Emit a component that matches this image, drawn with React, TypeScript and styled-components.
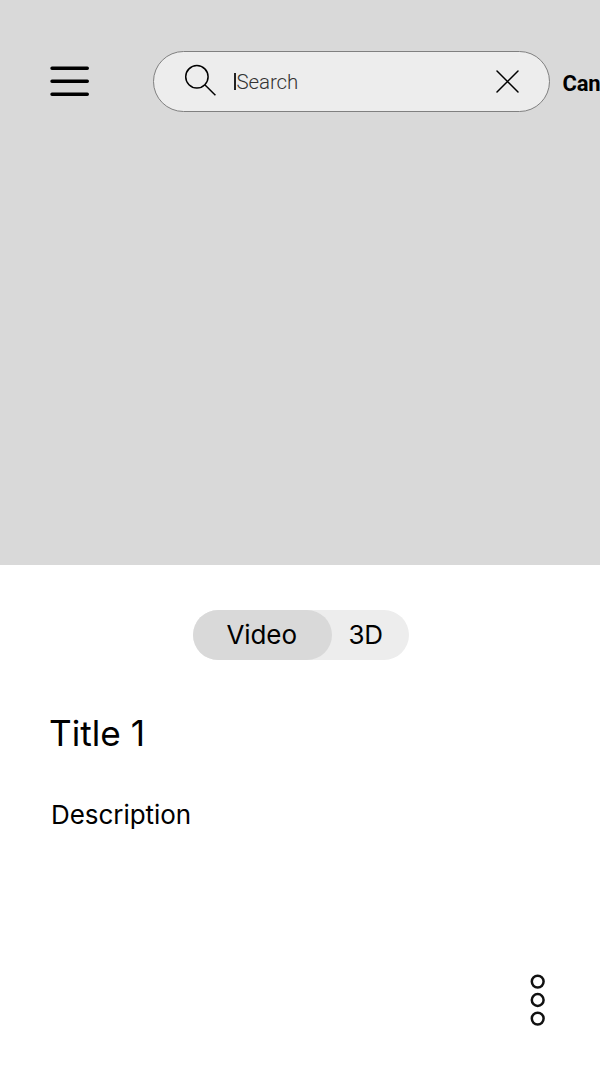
import React from "react";
import styled, { createGlobalStyle } from "styled-components";

const GlobalStyle = createGlobalStyle`
  * { box-sizing: border-box; }
  body { margin: 0; background: #fff; }
  button { border: 0; padding: 0; margin: 0; background: none; color: inherit; font: inherit; }
`;

const Screen = styled.div`
  display: flex;
  flex-direction: column;
  width: 600px;
  height: 1067px;
  overflow: hidden;
  background: #fff;
  color: #000;
  font-family: Inter, sans-serif;
`;

const Hero = styled.section`
  height: 565px;
  flex: none;
  background: #d9d9d9;
`;

const TopBar = styled.header`
  display: flex;
  align-items: flex-start;
  padding: 51px 0 0 50px;
`;

const MenuButton = styled.button`
  width: 40px;
  height: 61px;
  margin-right: 63px;
  svg { display: block; }
`;

const SearchBar = styled.div`
  display: flex;
  align-items: center;
  flex: none;
  width: 396.5px;
  height: 60.6px;
  padding: 0 29.5px 0 31px;
  border: 1px solid #808080;
  border-radius: 31px;
  background: #ededed;
  svg { display: block; flex: none; overflow: visible; }
`;

const Caret = styled.span`
  width: 1.5px;
  height: 17px;
  margin-left: 17px;
  background: #222;
`;

const Placeholder = styled.span`
  flex: 1;
  margin: 1px 0 0 1px;
  font: 300 20.5px/28px Roboto, sans-serif;
  letter-spacing: -0.1px;
  color: #333;
`;

const CancelButton = styled.button`
  && {
    margin: 19px 0 0 13px;
    font: 700 22px/28px Roboto, sans-serif;
    letter-spacing: -0.2px;
  }
`;

const Content = styled.main`
  display: flex;
  flex-direction: column;
  flex: 1;
  padding: 45px 50px 40px;
`;

const Segments = styled.div`
  display: flex;
  width: 216px;
  height: 49.5px;
  margin-left: 142.7px;
  border-radius: 25px;
  background: #ededed;
`;

const Segment = styled.button<{ $active?: boolean }>`
  && {
    width: ${(p) => (p.$active ? "139px" : "68px")};
    padding-right: ${(p) => (p.$active ? "1px" : "0")};
    border-radius: 25px;
    background: ${(p) => (p.$active ? "#d9d9d9" : "transparent")};
    font-size: 26px;
    line-height: 32px;
    letter-spacing: -0.1px;
  }
`;

const Title = styled.h1`
  margin: 51px 0 0 -1px;
  font-size: 35.2px;
  line-height: 44px;
  font-weight: 400;
`;

const Description = styled.p`
  margin: 44px 0 0 1px;
  font-size: 26px;
  line-height: 32px;
  letter-spacing: -0.05px;
`;

const MoreButton = styled.button`
  && { margin: auto 4px 0 auto; }
  width: 17px;
  height: 54px;
  svg { display: block; }
`;

export default function App() {
  return (
    <Screen>
      <GlobalStyle />
      <Hero>
        <TopBar>
          <MenuButton aria-label="Menu">
            <svg width="40" height="61" stroke="#000" strokeWidth="3.4" strokeLinecap="round">
              <path d="M2 17.2H37.3M2 30.3H37.3M2 43.3H37.3" />
            </svg>
          </MenuButton>
          <SearchBar>
            <svg width="32" height="32" fill="none" stroke="#000" strokeWidth="1.5">
              <circle cx="11.9" cy="11.8" r="11.2" />
              <path d="M19.8 19.7L30.4 30.3" />
            </svg>
            <Caret />
            <Placeholder>Search</Placeholder>
            <svg width="23" height="23" fill="none" stroke="#000" strokeWidth="1.5" strokeLinecap="round">
              <path d="M1 1L22 22M22 1L1 22" />
            </svg>
          </SearchBar>
          <CancelButton>Can</CancelButton>
        </TopBar>
      </Hero>
      <Content>
        <Segments>
          <Segment $active>Video</Segment>
          <Segment>3D</Segment>
        </Segments>
        <Title>Title 1</Title>
        <Description>Description</Description>
        <MoreButton aria-label="More">
          <svg width="17" height="54" fill="none" stroke="#111" strokeWidth="2.5">
            <circle cx="8.7" cy="8.6" r="5.9" />
            <circle cx="8.7" cy="27" r="5.9" />
            <circle cx="8.7" cy="45.6" r="5.9" />
          </svg>
        </MoreButton>
      </Content>
    </Screen>
  );
}
